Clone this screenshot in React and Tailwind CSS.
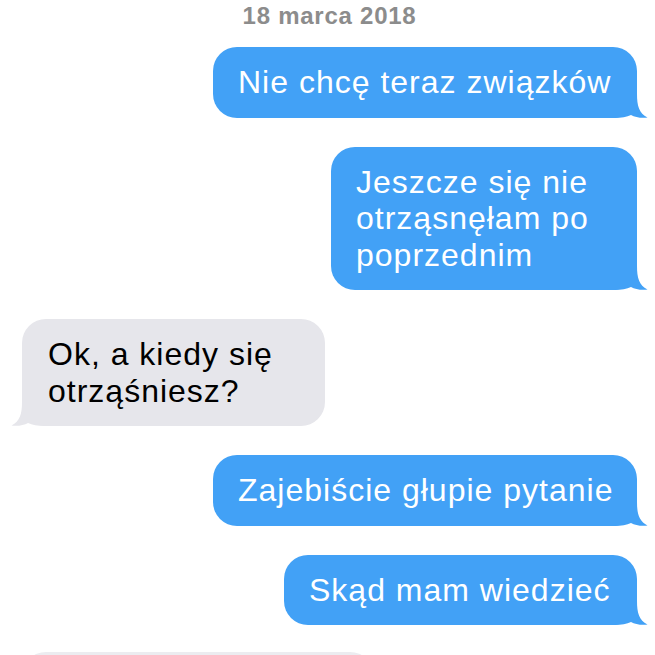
const BLUE = "#42a1f6";
const GRAY = "#e6e6eb";

const Tail = ({ side, color }) => {
  const cls =
    side === "right"
      ? "absolute bottom-0 right-[-11px]"
      : "absolute bottom-0 left-[-11px] -scale-x-100";
  return (
    <svg className={cls} width="36" height="24" viewBox="0 0 36 24">
      <path
        d="M0 0 H25 C25 12 27 19 35.5 23.6 C29 24.4 23 23.2 19 21 C15 23 9 24 3 24 H0 Z"
        fill={color}
      />
    </svg>
  );
};

const Bubble = ({ text, mine, width }) => (
  <div className={mine ? "flex justify-end pr-[18px]" : "flex justify-start pl-[22px]"}>
    <div
      className={`relative rounded-[24px] py-[17px] text-[32px] leading-[36.5px] tracking-[1px] ${
        mine ? "bg-[#42a1f6] text-white pl-[25px] pr-[22px]" : "bg-[#e6e6eb] text-black pl-[26px] pr-[22px]"
      } ${width}`}
    >
      <span className="relative z-10">{text}</span>
      <Tail side={mine ? "right" : "left"} color={mine ? BLUE : GRAY} />
    </div>
  </div>
);

const messages = [
  { text: "Nie chcę teraz związków", mine: true, width: "w-[424px]" },
  { text: "Jeszcze się nie otrząsnęłam po poprzednim", mine: true, width: "w-[306px]" },
  { text: "Ok, a kiedy się otrząśniesz?", mine: false, width: "w-[303px]" },
  { text: "Zajebiście głupie pytanie", mine: true, width: "w-[424px]" },
  { text: "Skąd mam wiedzieć", mine: true, width: "w-[353px]" },
];

export default function App() {
  return (
    <div className="w-[655px] h-[655px] overflow-hidden bg-white font-['Liberation_Sans',Arial,sans-serif]">
      <div className="pt-[1px] text-center text-[24px] leading-[30px] font-bold tracking-[0.75px] text-[#8c8c8c] pl-[4px]">
        18 marca 2018
      </div>
      <div className="mt-[16px] flex flex-col gap-[29px]">
        {messages.map((m, i) => (
          <Bubble key={i} {...m} />
        ))}
        <div className="-mt-[2px] flex justify-start pl-[22px]">
          <div className="h-[70px] w-[352px] rounded-[24px] bg-[#ececf0]" />
        </div>
      </div>
    </div>
  );
}
